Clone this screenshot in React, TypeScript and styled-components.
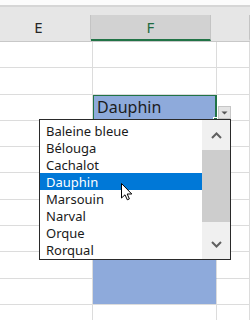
import React from "react";
import styled, { createGlobalStyle } from "styled-components";

const Global = createGlobalStyle`
  html, body { margin: 0; padding: 0; background: #fff; overflow: hidden; }
  body { font-family: "Noto Sans", "Open Sans", sans-serif; }
`;

const Page = styled.div`
  position: relative;
  width: 250px;
  height: 320px;
  overflow: hidden;
  background: #fff;
`;

const TopStrip = styled.div`
  height: 5px;
  background: #fcfcfc;
  border-bottom: 2px solid #d6d6d6;
`;

const HeaderBand = styled.div`
  height: 35px;
  box-sizing: border-box;
  background: #e6e6e6;
  border-bottom: 1px solid #c8c8c8;
  display: flex;
  align-items: flex-end;
`;

const ColHeader = styled.div<{ $w: number; $sel?: boolean; $pr?: number }>`
  width: ${(p) => p.$w}px;
  height: 26px;
  box-sizing: border-box;
  display: flex;
  align-items: center;
  justify-content: center;
  padding-right: ${(p) => p.$pr ?? 0}px;
  font-size: 15px;
  color: ${(p) => (p.$sel ? "#1e6b41" : "#262626")};
  background: ${(p) => (p.$sel ? "#d2d2d2" : "transparent")};
  border-right: 1px solid #c4c4c4;
  border-bottom: 2px solid ${(p) => (p.$sel ? "#217346" : "transparent")};
`;

const Row = styled.div`
  display: flex;
  height: 26.3px;
`;

const Cell = styled.div<{ $w?: number; $sel?: boolean; $last?: boolean; $active?: boolean }>`
  position: relative;
  ${(p) => (p.$w ? `width: ${p.$w}px;` : "flex: 1;")}
  box-sizing: border-box;
  border-right: 1px solid #dcdcdc;
  border-bottom: 1px solid ${(p) => (p.$sel && !p.$last ? "#8eaadb" : "#dcdcdc")};
  background: ${(p) => (p.$sel ? "#8eaadb" : "#fff")};
  display: flex;
  align-items: center;
  padding-left: 4px;
  font-size: 16px;
  color: #1c1c1c;
  ${(p) => (p.$active ? "box-shadow: inset 0 0 0 1px #217346; border-color: #217346;" : "")}
`;

const FillHandle = styled.div`
  position: absolute;
  right: -3px;
  bottom: -3px;
  width: 4px;
  height: 4px;
  background: #217346;
  border: 1px solid #fff;
`;

const DropButton = styled.div`
  position: absolute;
  left: 218px;
  top: 106px;
  width: 13px;
  height: 13px;
  box-sizing: border-box;
  background: #e4e4e4;
  border: 1px solid #c6c6c6;
  display: flex;
  align-items: center;
  justify-content: center;
`;

const ListBox = styled.div`
  position: absolute;
  left: 39px;
  top: 119px;
  width: 192px;
  height: 141px;
  box-sizing: border-box;
  border: 1px solid #2a2a2a;
  background: #fff;
  display: flex;
  overflow: hidden;
`;

const Items = styled.div`
  flex: 1;
  padding-top: 2px;
  display: flex;
  flex-direction: column;
`;

const Item = styled.div<{ $hl?: boolean }>`
  flex: 0 0 17.1px;
  height: 17.1px;
  display: flex;
  align-items: center;
  padding-left: 6px;
  font-size: 13px;
  white-space: nowrap;
  color: ${(p) => (p.$hl ? "#fff" : "#1a1a1a")};
  background: ${(p) => (p.$hl ? "#0078d7" : "transparent")};
`;

const ScrollBar = styled.div`
  width: 28px;
  background: #f0f0f0;
  display: flex;
  flex-direction: column;
`;

const ScrollBtn = styled.div<{ $h: number }>`
  height: ${(p) => p.$h}px;
  display: flex;
  align-items: center;
  justify-content: center;
`;

const Thumb = styled.div`
  height: 72px;
  background: #cdcdcd;
`;

const Track = styled.div`
  flex: 1;
`;

const Cursor = styled.svg`
  position: absolute;
  left: 121px;
  top: 183px;
`;

const items = ["Baleine bleue", "Bélouga", "Cachalot", "Dauphin", "Marsouin", "Narval", "Orque", "Rorqual"];

export default function App() {
  const rows = Array.from({ length: 11 }, (_, i) => i);
  return (
    <Page>
      <Global />
      <TopStrip />
      <HeaderBand>
        <ColHeader $w={93} $pr={13}>E</ColHeader>
        <ColHeader $w={124} $sel>F</ColHeader>
        <ColHeader $w={40} />
      </HeaderBand>
      {rows.map((i) => {
        const sel = i >= 2 && i <= 9;
        return (
          <Row key={i}>
            <Cell $w={93} />
            <Cell $w={124} $sel={sel} $last={i === 9} $active={i === 2}>
              {i === 2 ? "Dauphin" : null}
              {i === 2 ? <FillHandle /> : null}
            </Cell>
            <Cell />
          </Row>
        );
      })}
      <DropButton>
        <svg width="7" height="4" viewBox="0 0 7 4">
          <path d="M0.5 0.5 L6.5 0.5 L3.5 3.5 Z" fill="#555" />
        </svg>
      </DropButton>
      <ListBox>
        <Items>
          {items.map((t) => (
            <Item key={t} $hl={t === "Dauphin"}>
              {t}
            </Item>
          ))}
        </Items>
        <ScrollBar>
          <ScrollBtn $h={30}>
            <svg width="11" height="7" viewBox="0 0 11 7">
              <path d="M1 6 L5.5 1.5 L10 6" fill="none" stroke="#606060" strokeWidth="2" />
            </svg>
          </ScrollBtn>
          <Thumb />
          <Track />
          <ScrollBtn $h={30}>
            <svg width="11" height="7" viewBox="0 0 11 7">
              <path d="M1 1 L5.5 5.5 L10 1" fill="none" stroke="#606060" strokeWidth="2" />
            </svg>
          </ScrollBtn>
        </ScrollBar>
      </ListBox>
      <Cursor width="12" height="18" viewBox="0 0 12 18">
        <path d="M0.5 0.5 L0.5 15 L4 11.8 L6.3 16.8 L8.4 15.9 L6.2 11 L10.8 11 Z" fill="#fff" stroke="#000" strokeWidth="1" strokeLinejoin="round" />
      </Cursor>
    </Page>
  );
}
